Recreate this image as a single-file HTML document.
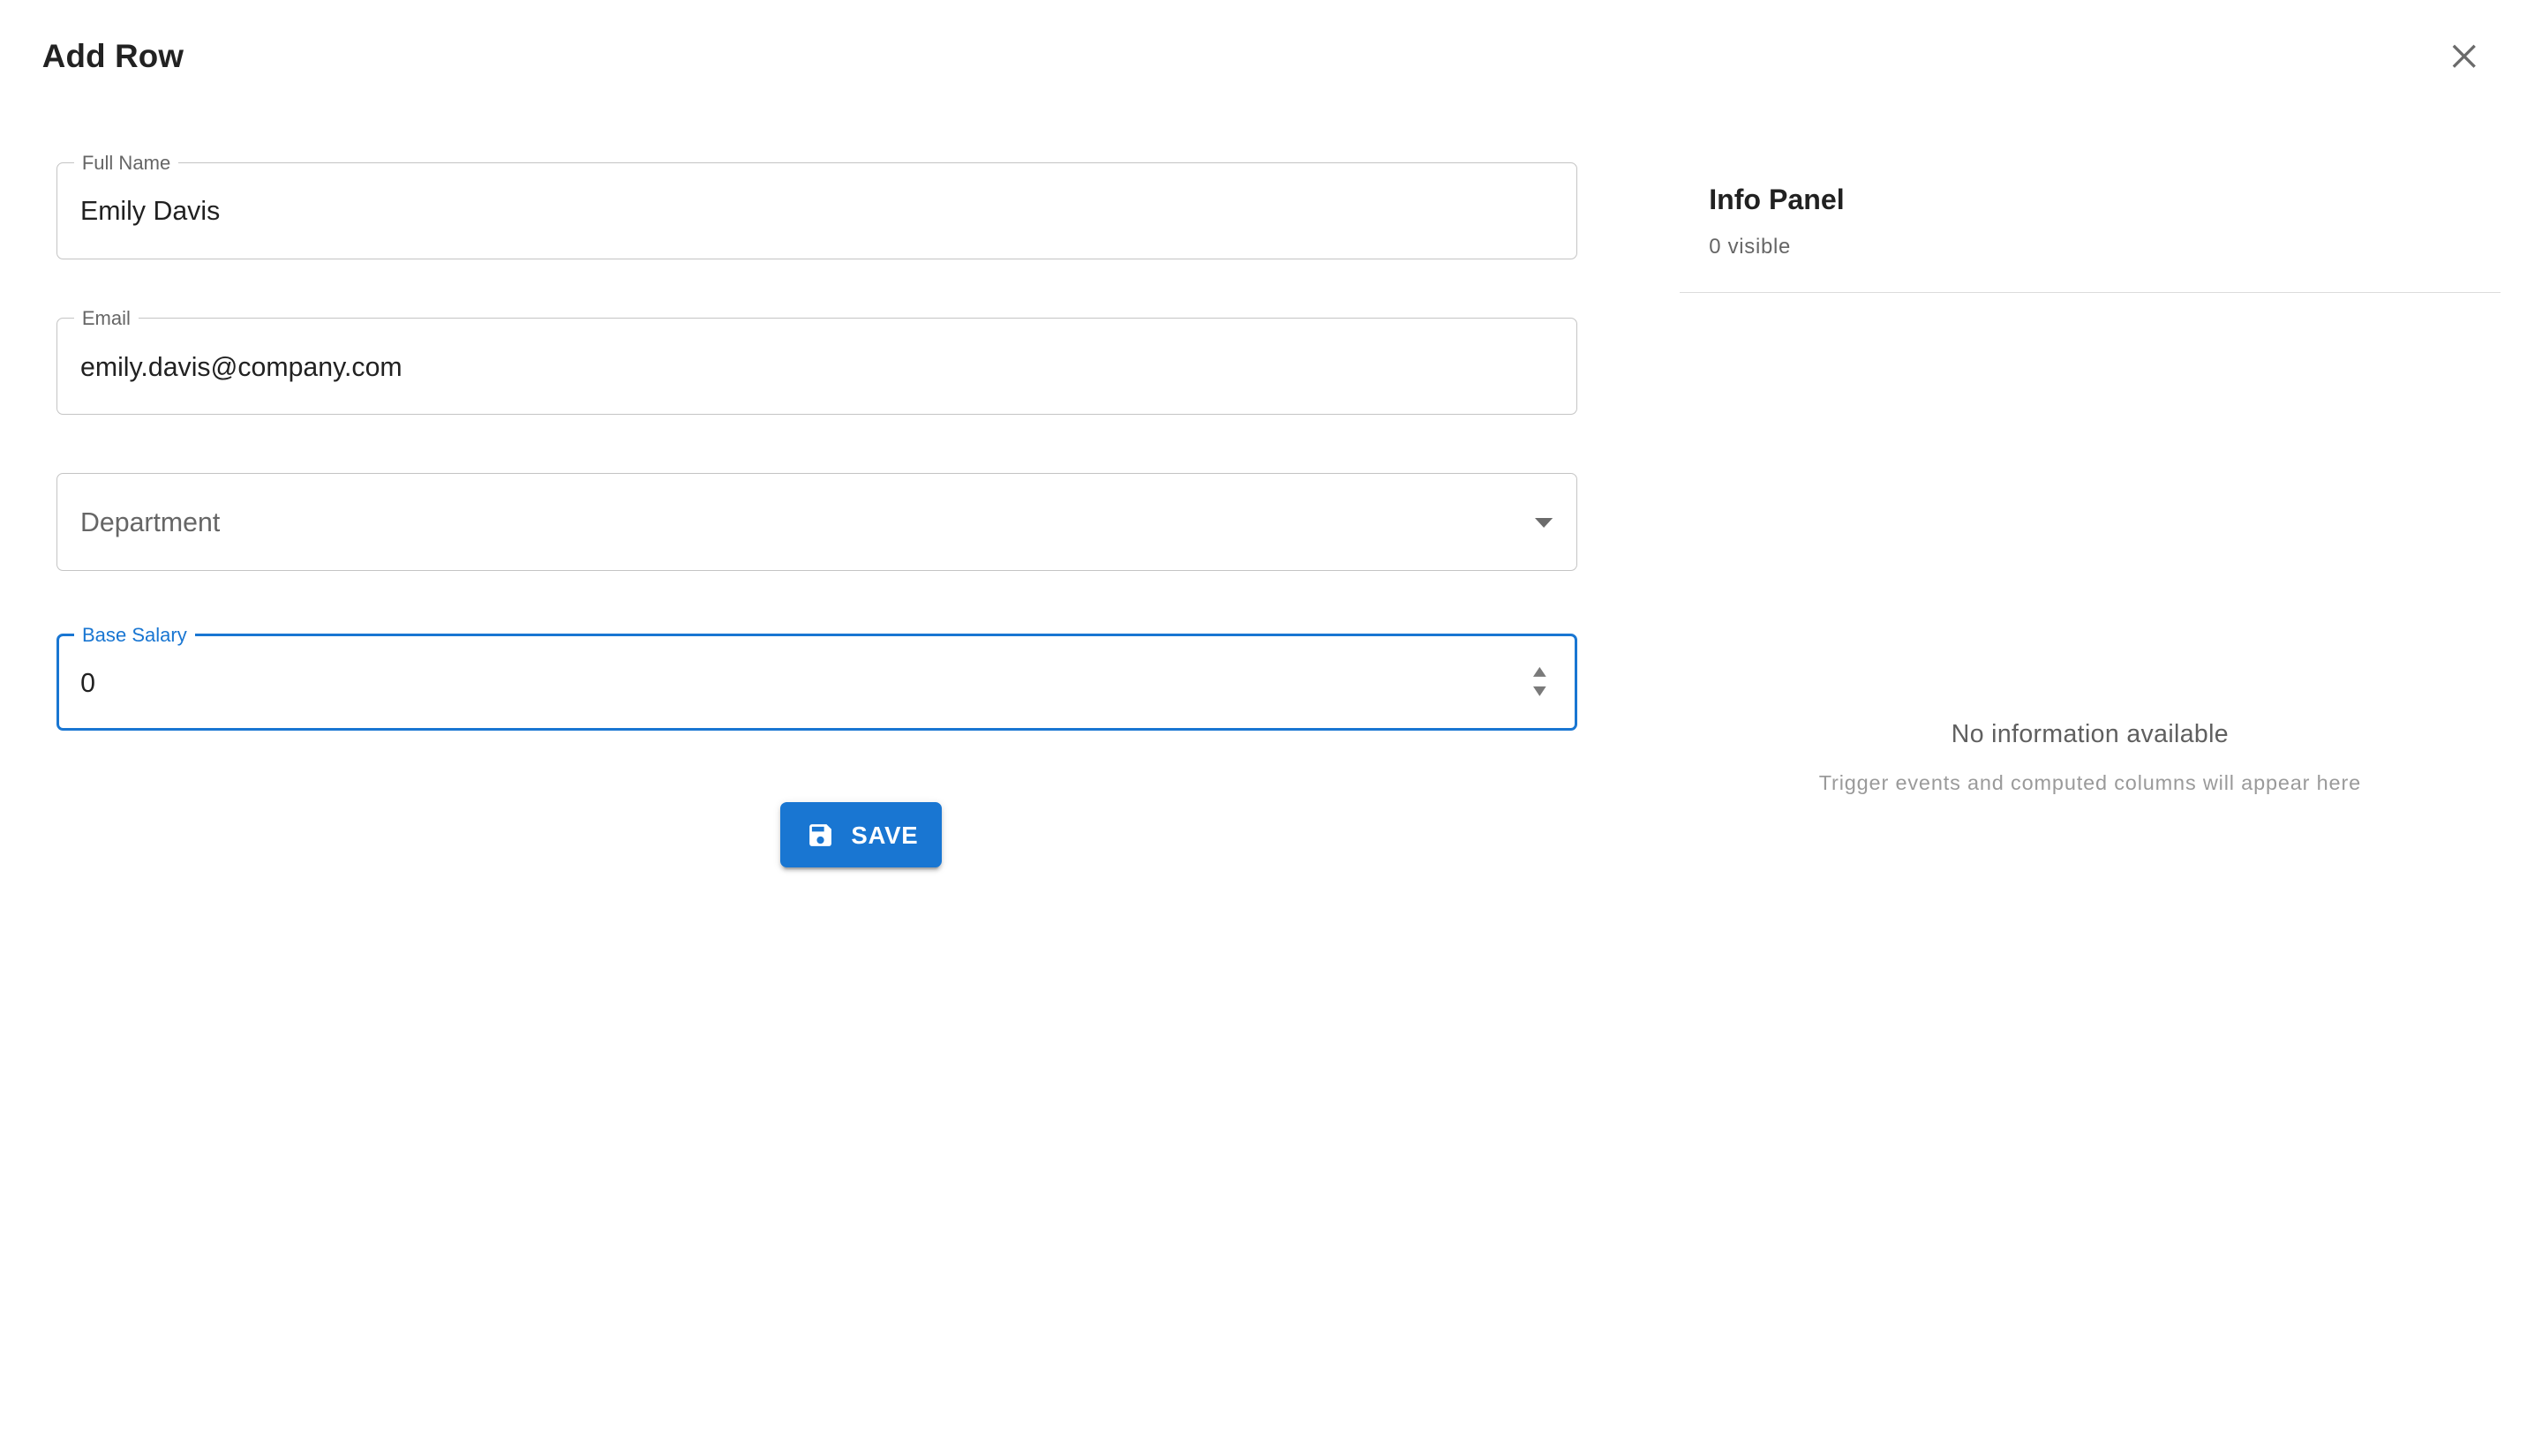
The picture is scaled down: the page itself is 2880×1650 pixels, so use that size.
<!DOCTYPE html>
<html><head><meta charset="utf-8"><style>
html,body{margin:0;padding:0;background:#fff;}
body{width:1568px;height:898px;zoom:1.837;position:relative;overflow:hidden;font-family:"Liberation Sans",Roboto,Arial,sans-serif;color:rgba(0,0,0,.87);}
.abs{position:absolute;}
.title{left:26px;top:22px;font-size:20px;font-weight:bold;line-height:26px;letter-spacing:.1px;color:#222;}
.fs{position:absolute;left:35px;width:938px;height:60px;box-sizing:border-box;border:1px solid #c4c4c4;border-radius:4px;}
.lbl{position:absolute;left:10px;top:-7px;background:#fff;padding:0 5px;font-size:12px;line-height:14px;color:#666;}
.val{position:absolute;left:14px;top:20.5px;font-size:16.5px;line-height:20px;}
.focus{border:2px solid #1976d2;}
.focus .lbl{color:#1976d2;left:9px;top:-8px;}
.focus .val{left:13px;top:19.5px;}
.btn{left:481px;top:495px;width:100px;height:40px;background:#1976d2;border-radius:4px;box-shadow:0 3px 1px -2px rgba(0,0,0,.2),0 2px 2px rgba(0,0,0,.14),0 1px 5px rgba(0,0,0,.12);color:#fff;font-weight:bold;font-size:15px;}
</style></head><body>
<div class="abs title">Add Row</div>
<svg class="abs" style="left:1512px;top:27px" width="15" height="15" viewBox="0 0 15 15"><path d="M1 1L14 14M14 1L1 14" stroke="#6b6b6b" stroke-width="1.8"/></svg>

<div class="fs" style="top:100px"><span class="lbl">Full Name</span><span class="val">Emily Davis</span></div>
<div class="fs" style="top:196px"><span class="lbl">Email</span><span class="val">emily.davis@company.com</span></div>
<div class="fs" style="top:292px"><span class="val" style="color:#666">Department</span>
<svg class="abs" style="left:911px;top:27px" width="12" height="7"><path d="M0 0h11L5.5 6z" fill="#6b6b6b"/></svg></div>
<div class="fs focus" style="top:391px"><span class="lbl">Base Salary</span><span class="val">0</span>
<svg class="abs" style="left:909px;top:18px" width="9" height="22"><path d="M0 7h8L4 1z M0 13h8L4 19z" fill="#7a7a7a"/></svg></div>

<div class="abs btn">
<svg class="abs" style="left:16px;top:11px" width="18" height="18" viewBox="0 0 24 24"><path d="M17 3H5a2 2 0 0 0-2 2v14a2 2 0 0 0 2 2h14a2 2 0 0 0 2-2V7l-4-4zm-5 16a3 3 0 1 1 0-6 3 3 0 0 1 0 6zm3-10H5V5h10v4z" fill="#fff"/></svg>
<span class="abs" style="left:44px;top:11px;line-height:18px;letter-spacing:.4px">SAVE</span></div>

<div class="abs" style="left:1054px;top:112px;font-size:17.5px;font-weight:bold;line-height:22px">Info Panel</div>
<div class="abs" style="left:1054px;top:144px;font-size:13px;color:#666;line-height:16px;letter-spacing:.4px">0 visible</div>
<div class="abs" style="left:1036px;top:180px;width:506px;height:1px;background:#dcdcdc"></div>
<div class="abs" style="left:1036px;width:506px;top:443px;text-align:center;font-size:15.5px;color:#5f5f5f;line-height:20px;letter-spacing:.2px">No information available</div>
<div class="abs" style="left:1036px;width:506px;top:475px;text-align:center;font-size:12.8px;color:#9a9a9a;line-height:16px;letter-spacing:.45px">Trigger events and computed columns will appear here</div>
</body></html>
